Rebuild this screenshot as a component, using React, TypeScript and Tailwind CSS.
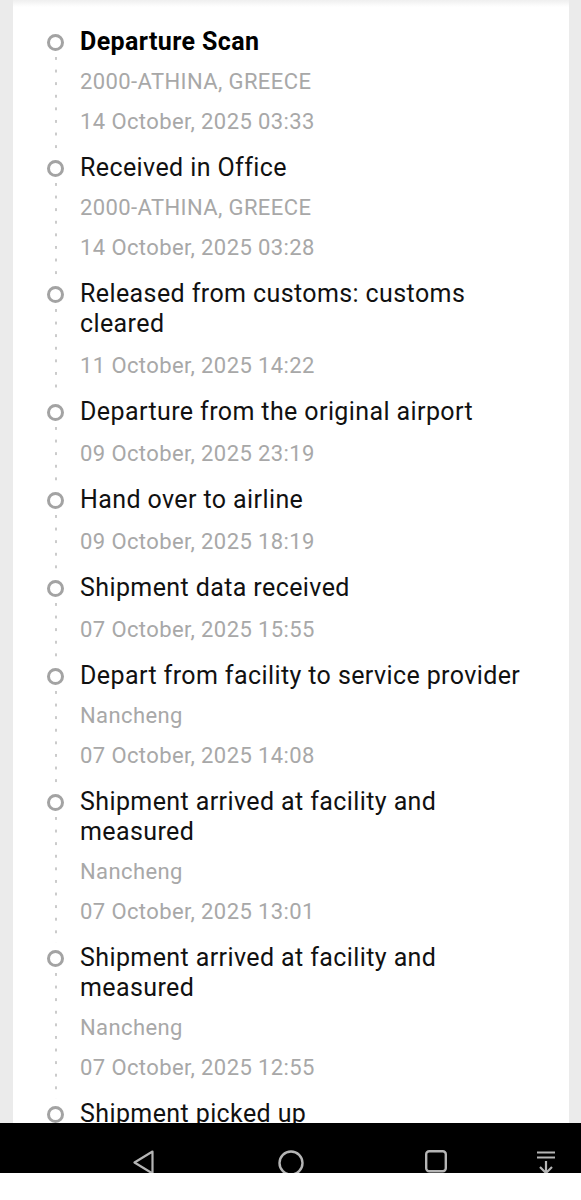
import React from "react";

type Event = {
  title: string;
  lines: string[];
  bold?: boolean;
};

const events: Event[] = [
  { title: "Departure Scan", lines: ["2000-ATHINA, GREECE", "14 October, 2025 03:33"], bold: true },
  { title: "Received in Office", lines: ["2000-ATHINA, GREECE", "14 October, 2025 03:28"] },
  { title: "Released from customs: customs cleared", lines: ["11 October, 2025 14:22"] },
  { title: "Departure from the original airport", lines: ["09 October, 2025 23:19"] },
  { title: "Hand over to airline", lines: ["09 October, 2025 18:19"] },
  { title: "Shipment data received", lines: ["07 October, 2025 15:55"] },
  { title: "Depart from facility to service provider", lines: ["Nancheng", "07 October, 2025 14:08"] },
  { title: "Shipment arrived at facility and measured", lines: ["Nancheng", "07 October, 2025 13:01"] },
  { title: "Shipment arrived at facility and measured", lines: ["Nancheng", "07 October, 2025 12:55"] },
  { title: "Shipment picked up", lines: [] },
];

function TimelineItem({ item }: { item: Event }) {
  return (
    <li className="flex gap-[14px]">
      {/* marker column: ring + dotted rail */}
      <div className="flex w-[21px] shrink-0 flex-col items-center">
        <span className="mt-[7px] h-[17px] w-[17px] shrink-0 rounded-full border-[3px] border-[#a3a3a3]" />
        <span className="mt-[6px] w-[2px] flex-1 bg-[linear-gradient(to_bottom,#cbcbcb_3px,transparent_3px)] bg-[length:2px_12.6px]" />
      </div>
      <div className="min-w-0 flex-1 pb-[11px]">
        <p
          className={`text-[25px] leading-[30px] tracking-[0.4px] ${
            item.bold ? "font-bold text-black" : "font-normal text-[#111]"
          }`}
        >
          {item.title}
        </p>
        {/* date-only rows sit a touch lower */}
        <div className={item.lines.length > 1 ? "pt-[5px]" : "pt-[7px]"}>
          {item.lines.map((line, i) => (
            <p key={i} className="text-[22px] leading-[40px] tracking-[0.4px] text-[#a8a8a8]">
              {line}
            </p>
          ))}
        </div>
      </div>
    </li>
  );
}

function NavBar() {
  return (
    <div className="flex h-[50px] items-start overflow-hidden bg-black pt-[27px]">
      <svg width="21" height="26" viewBox="0 0 21 26" className="ml-[133px] shrink-0">
        <path d="M19.5 1.5 L1.5 12.5 L19.5 23.5 Z" fill="none" stroke="#b5b5b5" strokeWidth="2.2" strokeLinejoin="round" />
      </svg>
      <svg width="26" height="26" viewBox="0 0 26 26" className="ml-[124px] shrink-0">
        <circle cx="13" cy="13" r="11.5" fill="none" stroke="#b5b5b5" strokeWidth="2.4" />
      </svg>
      <svg width="22" height="26" viewBox="0 0 22 26" className="ml-[121px] shrink-0">
        <rect x="1.2" y="1.2" width="19.6" height="20" rx="3" fill="none" stroke="#b5b5b5" strokeWidth="2.4" />
      </svg>
      <svg width="20" height="26" viewBox="0 0 20 26" className="ml-[89px] shrink-0">
        <path d="M1 2.5 H19 M1 7.5 H19 M10 11 V23 M4 17 L10 23 L16 17" fill="none" stroke="#b5b5b5" strokeWidth="2.2" />
      </svg>
    </div>
  );
}

export default function App() {
  return (
    <div className="flex h-[1200px] w-[581px] flex-col bg-white font-['Roboto',sans-serif]">
      <div className="h-[1123px] shrink-0 overflow-hidden bg-[#ebebeb] pl-[13px] pr-[12px]">
        <div className="relative h-full bg-white pl-[32px] pr-4 pt-[16px]">
          <div className="absolute inset-x-0 top-0 h-[7px] bg-gradient-to-b from-[#efefef] to-white" />
          <ol className="relative pt-[11px]">
            {events.map((e, i) => (
              <TimelineItem key={i} item={e} />
            ))}
          </ol>
        </div>
      </div>
      <NavBar />
    </div>
  );
}
